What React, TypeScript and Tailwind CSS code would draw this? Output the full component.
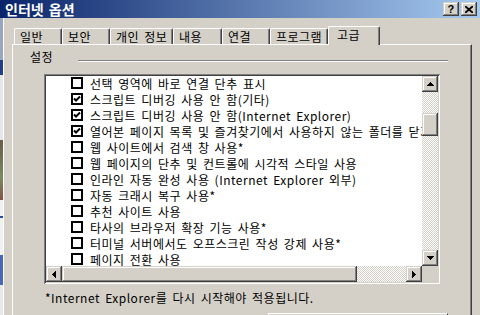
import React from 'react'

const items = [
  { checked: false, label: '선택 영역에 바로 연결 단추 표시' },
  { checked: true, label: '스크립트 디버깅 사용 안 함(기타)' },
  { checked: true, label: '스크립트 디버깅 사용 안 함(Internet Explorer)' },
  { checked: true, label: '열어본 페이지 목록 및 즐겨찾기에서 사용하지 않는 폴더를 닫기' },
  { checked: false, label: '웹 사이트에서 검색 창 사용*' },
  { checked: false, label: '웹 페이지의 단추 및 컨트롤에 시각적 스타일 사용' },
  { checked: false, label: '인라인 자동 완성 사용 (Internet Explorer 외부)' },
  { checked: false, label: '자동 크래시 복구 사용*' },
  { checked: false, label: '추천 사이트 사용' },
  { checked: false, label: '타사의 브라우저 확장 기능 사용*' },
  { checked: false, label: '터미널 서버에서도 오프스크린 작성 강제 사용*' },
  { checked: false, label: '페이지 전환 사용' },
]

const tabs = [
  { label: '일반', w: 'w-[48px]' },
  { label: '보안', w: 'w-[48px]' },
  { label: '개인 정보', w: 'w-[63px]' },
  { label: '내용', w: 'w-[49px]' },
  { label: '연결', w: 'w-[48px]' },
  { label: '프로그램', w: 'w-[58px]' },
]

const raised =
  'bg-[#d4d0c8] shadow-[inset_-1px_-1px_#404040,inset_1px_1px_#d4d0c8,inset_-2px_-2px_#808080,inset_2px_2px_#ffffff]'

const checker =
  'bg-[repeating-conic-gradient(#d4d0c8_0_25%,#ffffff_0_50%)] bg-[length:2px_2px]'

function Arrow({ dir }: { dir: 'up' | 'down' | 'left' | 'right' }) {
  const pts = {
    up: '3.5,0 7,4 0,4',
    down: '0,0 7,0 3.5,4',
    left: '4,0 4,7 0,3.5',
    right: '0,0 0,7 4,3.5',
  }[dir]
  const vertical = dir === 'up' || dir === 'down'
  return (
    <svg width={vertical ? 7 : 4} height={vertical ? 4 : 7} shapeRendering="crispEdges">
      <polygon points={pts} fill="#000" />
    </svg>
  )
}

function ScrollBtn({ dir }: { dir: 'up' | 'down' | 'left' | 'right' }) {
  return (
    <div className={`flex h-[16px] w-[16px] shrink-0 items-center justify-center ${raised}`}>
      <Arrow dir={dir} />
    </div>
  )
}

function CheckBox({ checked }: { checked: boolean }) {
  return (
    <svg width="12" height="12" className="shrink-0" shapeRendering="crispEdges">
      <rect x="1" y="1" width="10" height="10" fill="#fff" stroke="#000" strokeWidth="2" />
      {checked && (
        <polyline
          points="3,5.5 5,7.5 9,3.5"
          fill="none"
          stroke="#000"
          strokeWidth="2"
          shapeRendering="auto"
        />
      )}
    </svg>
  )
}

export default function App() {
  return (
    <div className="flex h-[315px] w-[480px] flex-col overflow-hidden bg-[#d4d0c8] font-['Noto_Sans_CJK_KR',sans-serif] text-[12px] tracking-[0.5px] text-black [word-spacing:2px]">
      {/* title bar */}
      <div className="flex h-[18px] shrink-0 items-center bg-[linear-gradient(to_right,#0a246a,#a6caf0)] pl-[5px] pr-[3px]">
        <span className="flex-1 text-[14px] font-bold leading-[15px] tracking-normal text-white">인터넷 옵션</span>
        <div className="flex gap-[2px]">
          <div className={`flex h-[14px] w-[16px] items-center justify-center ${raised}`}>
            <span className="font-['Liberation_Sans',sans-serif] text-[11px] font-bold leading-[11px]">?</span>
          </div>
          <div className={`flex h-[14px] w-[16px] items-center justify-center ${raised}`}>
            <svg width="8" height="7" shapeRendering="crispEdges">
              <path d="M0 0 L8 7 M8 0 L0 7" stroke="#000" strokeWidth="1.8" shapeRendering="auto" />
            </svg>
          </div>
        </div>
      </div>

      <div className="flex min-h-0 flex-1">
        <div className="w-[3px] bg-[linear-gradient(to_bottom,#9aa6c0_0px,#9aa6c0_42px,#243f8a_42px,#243f8a_57px,#e4e6ea_57px,#e4e6ea_122px,#6a5a48_122px,#7a8a60_160px,#8a5040_182px,#f0f0f0_182px,#f0f0f0_198px,#2a4a9a_198px,#2a4a9a_200px,#f0f0f0_200px,#f0f0f0_237px,#4a66b8_237px,#4a66b8_267px,#e8e8e8_267px)]" />
        <div className="w-px bg-white" />
        <div className="w-[8px]" />

        <div className="flex min-w-0 flex-1 flex-col pt-[8px]">
          {/* tabs */}
          <div className="flex h-[18px] shrink-0 items-end pl-[2px]">
            {tabs.map((t) => (
              <div
                key={t.label}
                className={`${t.w} h-[16px] shrink-0 whitespace-nowrap rounded-t-[2px] border-x border-t border-l-white border-t-white border-r-[#404040] pl-[5px] pt-[1px] leading-[14px] shadow-[inset_-1px_0_#808080]`}
              >
                {t.label}
              </div>
            ))}
            <div className="relative z-10 -mb-px h-[19px] w-[52px] shrink-0 rounded-t-[2px] border-x border-t border-l-white border-t-white border-r-[#404040] bg-[#d4d0c8] pl-[8px] pt-px leading-[14px] shadow-[inset_-1px_0_#808080]">
              고급
            </div>
          </div>

          {/* panel */}
          <div className="flex min-h-0 flex-1 flex-col border-l border-r border-t border-l-white border-r-[#404040] border-t-white shadow-[inset_-1px_0_#808080]">
            <div className="mt-[5px] flex items-start pl-[17px] pr-[23px]">
              <span className="leading-[14px]">설정</span>
              <div className="ml-[25px] mt-[10px] h-[2px] flex-1 border-t border-b border-t-[#808080] border-b-white" />
            </div>

            {/* list box */}
            <div className="ml-[31px] mt-[10px] flex h-[210px] w-[396px] shrink-0 flex-col bg-white p-[2px] shadow-[inset_1px_1px_#808080,inset_-1px_-1px_#ffffff,inset_2px_2px_#404040,inset_-2px_-2px_#d4d0c8]">
              <div className="flex min-h-0 flex-1">
                <div className="min-w-0 flex-1 overflow-hidden">
                  <div className="-mt-px">
                    {items.map((it) => (
                      <div key={it.label} className="flex h-[16px] items-center whitespace-nowrap pl-[25px]">
                        <CheckBox checked={it.checked} />
                        <span className="ml-[7px] leading-[15px]">{it.label}</span>
                      </div>
                    ))}
                  </div>
                </div>
                <div className="flex w-[16px] shrink-0 flex-col">
                  <ScrollBtn dir="up" />
                  <div className={`flex min-h-0 flex-1 flex-col ${checker}`}>
                    <div className={`mt-[21px] h-[23px] w-[16px] ${raised}`} />
                  </div>
                  <ScrollBtn dir="down" />
                </div>
              </div>
              <div className="flex h-[16px] shrink-0">
                <ScrollBtn dir="left" />
                <div className={`h-[16px] w-[295px] shrink-0 ${raised}`} />
                <div className={`flex-1 ${checker}`} />
                <ScrollBtn dir="right" />
                <div className="w-[16px] shrink-0 bg-[#d4d0c8]" />
              </div>
            </div>

            <div className="ml-[32px] mt-[7px] whitespace-nowrap leading-[14px]">
              *Internet Explorer를 다시 시작해야 적용됩니다.
            </div>

            <div className="ml-[255px] mt-[8px] h-[23px] w-[180px] shrink-0 border-l border-r border-t border-l-white border-r-[#404040] border-t-white" />
          </div>
        </div>

        <div className="w-[8px]" />
      </div>
    </div>
  )
}
